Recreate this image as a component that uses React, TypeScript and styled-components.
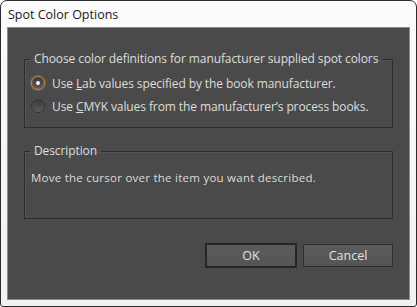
import React, { useState } from "react"
import styled, { createGlobalStyle } from "styled-components"

const GlobalStyle = createGlobalStyle`
	html, body {
		margin: 0;
		padding: 0;
		background: #ffffff;
	}
	* {
		box-sizing: border-box;
	}
`

const Frame = styled.div`
	width: 417px;
	height: 307px;
	display: flex;
	flex-direction: column;
	background: linear-gradient(#fbfbfb, #f1f1f1);
	border: 1px solid #2b2b2b;
	border-radius: 7px 7px 3px 3px;
	padding: 0 6px 6px 6px;
	font-family: "Open Sans", "Noto Sans", sans-serif;
`

const TitleBar = styled.div`
	height: 26px;
	display: flex;
	align-items: center;
	padding-left: 1px;
	font-size: 12.5px;
	color: #1a1a1a;
`

const Content = styled.div`
	flex: 1;
	background: #4a4a4a;
	border: 1px solid #8c8c8c;
	padding: 23px 16px 0 16px;
	display: flex;
	flex-direction: column;
	color: #dcdcdc;
`

const Group = styled.fieldset<{ $height: number }>`
	margin: 0;
	height: ${(p) => p.$height}px;
	border: 1px solid #2c2c2c;
	box-shadow: inset 1px 1px 0 #555555;
	padding: 0;
	min-width: 0;
`

const Legend = styled.legend`
	margin-left: 5px;
	padding: 0 4px;
	font-size: 12px;
	letter-spacing: -0.1px;
	line-height: 16px;
	white-space: nowrap;
	color: #dedede;
`

const Options = styled.div`
	display: flex;
	flex-direction: column;
	gap: 7px;
	padding: 8px 0 0 6px;
`

const OptionRow = styled.label`
	display: flex;
	align-items: center;
	gap: 7px;
	height: 16px;
	font-size: 12px;
	letter-spacing: -0.1px;
	white-space: nowrap;
	color: #dedede;
	cursor: default;
`

const RadioDot = styled.span<{ $on: boolean }>`
	flex: none;
	width: 14px;
	height: 14px;
	border-radius: 50%;
	display: flex;
	align-items: center;
	justify-content: center;
	border: 1px solid ${(p) => (p.$on ? "#c98a45" : "#353535")};
	background: linear-gradient(#3b3b3b, #5c5c5c);
	box-shadow: ${(p) => (p.$on ? "0 0 0 1px rgba(201,138,69,0.35)" : "none")};

	&::after {
		content: "";
		width: 4px;
		height: 4px;
		border-radius: 50%;
		background: #f0f0f0;
		display: ${(p) => (p.$on ? "block" : "none")};
	}
`

const Gap = styled.div`
	height: 15px;
	flex: none;
`

const DescText = styled.div`
	padding: 11px 0 0 6px;
	font-size: 11.5px;
	letter-spacing: 0.25px;
	color: #dcdcdc;
`

const ButtonRow = styled.div`
	display: flex;
	justify-content: flex-end;
	gap: 6px;
	margin-top: 24px;
`

const Button = styled.button<{ $default?: boolean }>`
	width: ${(p) => (p.$default ? 92 : 90)}px;
	height: ${(p) => (p.$default ? 25 : 23)}px;
	margin-top: ${(p) => (p.$default ? 0 : 1)}px;
	background: linear-gradient(#5c5c5c, #545454);
	border: ${(p) => (p.$default ? "2px solid #262626" : "1px solid #2e2e2e")};
	color: #e2e2e2;
	font-family: "Open Sans", "Noto Sans", sans-serif;
	font-size: 12.5px;
	padding: 0;
	border-radius: 0;
`

const options = [
	{ pre: "Use ", key: "L", post: "ab values specified by the book manufacturer." },
	{ pre: "Use ", key: "C", post: "MYK values from the manufacturer’s process books." },
]

export default function App() {
	const [choice, setChoice] = useState(0)

	return (
		<>
			<GlobalStyle />
			<Frame>
				<TitleBar>Spot Color Options</TitleBar>
				<Content>
					<Group $height={77}>
						<Legend>Choose color definitions for manufacturer supplied spot colors</Legend>
						<Options>
							{options.map((o, i) => (
								<OptionRow key={i} onClick={() => setChoice(i)}>
									<RadioDot $on={choice === i} />
									<span>
										{o.pre}
										<u>{o.key}</u>
										{o.post}
									</span>
								</OptionRow>
							))}
						</Options>
					</Group>
					<Gap />
					<Group $height={76}>
						<Legend>Description</Legend>
						<DescText>Move the cursor over the item you want described.</DescText>
					</Group>
					<ButtonRow>
						<Button $default>OK</Button>
						<Button>Cancel</Button>
					</ButtonRow>
				</Content>
			</Frame>
		</>
	)
}
